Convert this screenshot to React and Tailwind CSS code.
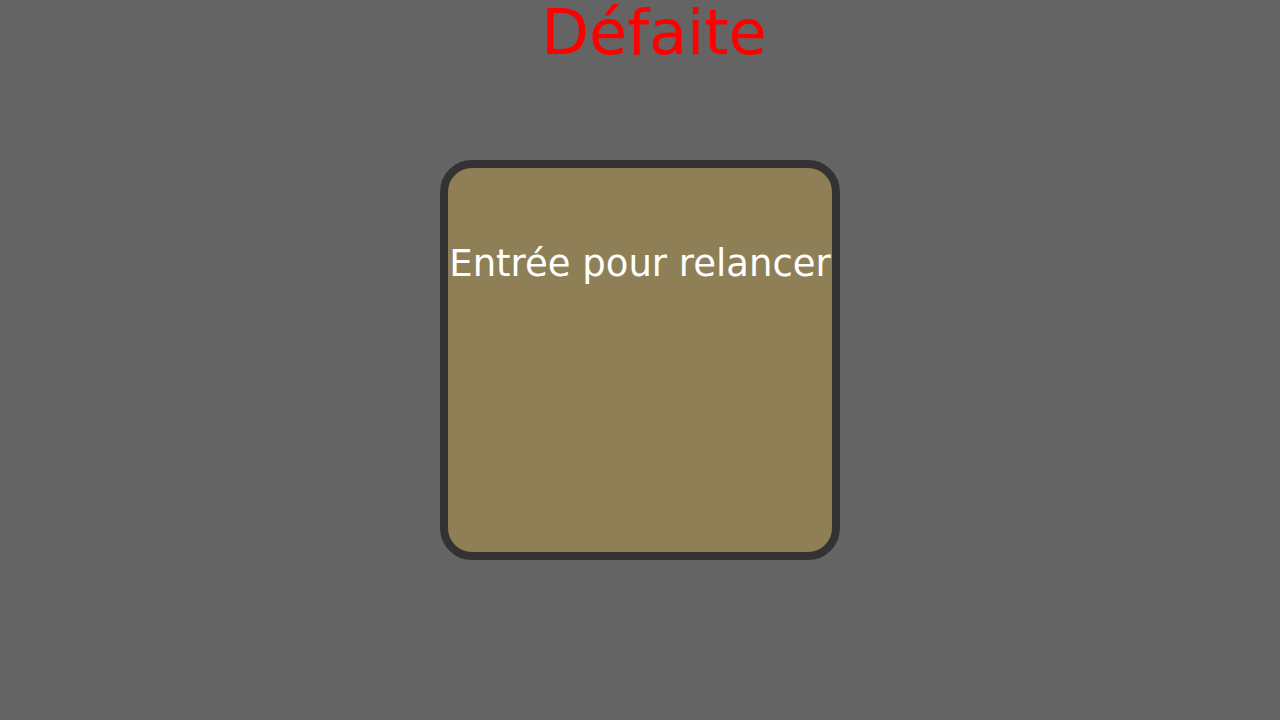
export default function App() {
  return (
    <div
      className="w-[1280px] h-[720px] bg-[#646464] flex flex-col items-center overflow-hidden"
      style={{ fontFamily: '"DejaVu Sans", sans-serif' }}
    >
      <div className="h-[66px] leading-[66px] text-[62px] text-[#ff0000] pl-[28px] whitespace-nowrap">
        Défaite
      </div>
      <div className="mt-[94px] w-[400px] h-[400px] border-8 border-[#333333] rounded-[32px] bg-[#8f7f57] flex flex-col items-center">
        <div className="pt-[74px] text-[37px] leading-[43px] text-white whitespace-nowrap">
          Entrée pour relancer
        </div>
      </div>
    </div>
  );
}
